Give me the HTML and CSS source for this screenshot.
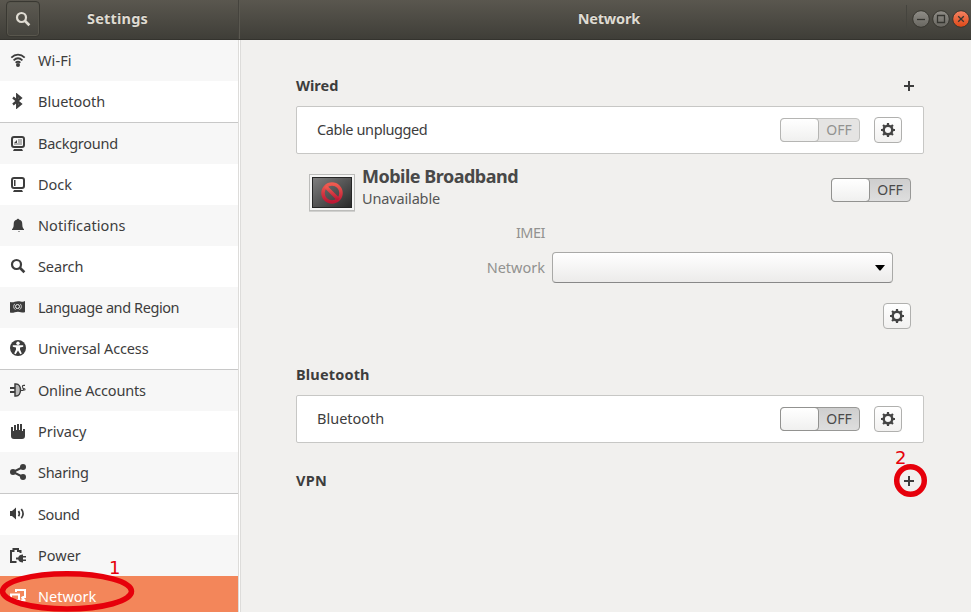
FILE: index.html
```html
<!DOCTYPE html>
<html lang="en">
<head>
<meta charset="utf-8">
<title>Settings</title>
<link rel="stylesheet" href="styles.css">
</head>
<body>
<svg class="defs" width="0" height="0" aria-hidden="true">
  <symbol id="gear" viewBox="0 0 16 16">
    <circle cx="8" cy="8" r="4.3" fill="none" stroke="currentColor" stroke-width="2.5"/>
    <path d="M8 1v3M8 12v3M1 8h3M12 8h3M3.050 3.050l2 2M10.950 10.950l2 2M3.050 12.950l2-2M10.950 5.050l2-2" fill="none" stroke="currentColor" stroke-width="2.200"/>
  </symbol>
  <symbol id="search" viewBox="0 0 16 16">
    <circle cx="6.5" cy="6.5" r="4.5" fill="none" stroke="currentColor" stroke-width="2.2"/>
    <path d="M9.8 9.8l4.6 4.4" fill="none" stroke="currentColor" stroke-width="2.6"/>
  </symbol>
</svg>
<div class="window">
  <header class="titlebar">
    <div class="title-left">
      <button class="search-btn"><svg class="icon"><use href="#search"/></svg></button>
      <h1 class="title t-settings">Settings</h1>
    </div>
    <div class="title-right">
      <h1 class="title t-network">Network</h1>
      <div class="controls">
        <svg class="ctl" viewBox="0 0 18 18"><circle class="gray" cx="9" cy="9" r="8.300"/><path d="M5 9.500h8"/></svg>
        <svg class="ctl" viewBox="0 0 18 18"><circle class="gray" cx="9" cy="9" r="8.300"/><path d="M5.500 5.500h7v7h-7z"/></svg>
        <svg class="ctl" viewBox="0 0 18 18"><defs><linearGradient id="og" x2="0" y2="1"><stop stop-color="#f58464"/><stop offset="1" stop-color="#dc4716"/></linearGradient><linearGradient id="gg" x2="0" y2="1"><stop stop-color="#908e88"/><stop offset="1" stop-color="#686660"/></linearGradient></defs><circle class="orange" cx="9" cy="9" r="8.300"/><path d="M6.200 6.200l5.600 5.600M11.800 6.200l-5.600 5.600"/></svg>
      </div>
    </div>
  </header>

  <nav class="sidebar">
    <div class="item"><svg class="icon" viewBox="0 0 16 16"><g fill="none" stroke="currentColor" stroke-width="1.8"><path d="M1.300 5.600c4-4 9.400-4 13.400 0M3.600 8.300c2.700-2.500 6.100-2.500 8.800 0M5.600 10.700c1.600-1.300 3.200-1.300 4.800 0"/></g><circle cx="8" cy="13" r="2" fill="currentColor"/></svg><span class="l-wifi">Wi-Fi</span></div>
    <div class="item"><svg class="icon" viewBox="0 0 16 16"><path d="M3 4.500l7.800 6.500L7.200 14V2l3.600 3L3 11.500" fill="none" stroke="currentColor" stroke-width="2.300"/></svg><span>Bluetooth</span></div>
    <div class="item sep"><svg class="icon" viewBox="0 0 16 16"><rect x="2" y="2" width="12" height="10" rx="2" fill="none" stroke="currentColor" stroke-width="2"/><path d="M8 4h4v6H4V8h4z" fill="#b4b4b4"/><path d="M4 8l3-3v3zM4 14h8l1 2H3z" fill="currentColor"/></svg><span class="l-bg">Background</span></div>
    <div class="item"><svg class="icon" viewBox="0 0 16 16"><rect x="2" y="2" width="12" height="10" rx="2" fill="none" stroke="currentColor" stroke-width="2"/><path d="M4 4h1.500v6H4zM4 14h8l1 2H3z" fill="currentColor"/></svg><span>Dock</span></div>
    <div class="item"><svg class="icon" viewBox="0 0 16 16"><path d="M7 2.500C7 1.500 9 1.500 9 2.500c2.800.6 3.300 2.500 3.300 5 0 3 .7 3.500 1.700 4.800v.7H2v-.7c1-1.300 1.700-1.800 1.700-4.800 0-2.500.5-4.400 3.300-5zM8 14h2c-.3 1-1.700 1-2 0z" fill="currentColor"/></svg><span class="l-not">Notifications</span></div>
    <div class="item"><svg class="icon"><use href="#search"/></svg><span class="l-search">Search</span></div>
    <div class="item"><svg class="icon" viewBox="0 0 16 16"><path d="M0 3c3 1 5-.8 8-.8S13 3.500 15 2v11c-2 1.300-4-.3-7-.3S3 14.500 0 13.500z" fill="currentColor"/><g fill="none" stroke="#eee"><circle cx="7.500" cy="7.500" r="2"/><path d="M4.800 4.800c-1.500 1.500-1.500 4 0 5.500M10.200 4.800c1.500 1.500 1.500 4 0 5.500M5.500 10.500l1-1M9.500 10.500l-1-1" stroke-width=".8"/></g></svg><span class="l-lang">Language and Region</span></div>
    <div class="item"><svg class="icon" viewBox="0 0 16 16"><circle cx="8" cy="8" r="8" fill="currentColor"/><circle cx="8" cy="3.300" r="1.700" fill="#fff"/><path d="M2.800 5.200h10.400v1.600L10 7.600v2l1.800 4-1.500.7L8 10.500l-2.300 3.800-1.500-.7 1.800-4v-2l-3.200-.8z" fill="#fff"/></svg><span class="l-ua">Universal Access</span></div>
    <div class="item sep"><svg class="icon" viewBox="0 0 16 16"><path d="M5 2h1c6 0 6 12 0 12H5z" fill="#bbb" stroke="currentColor" stroke-width="1.500"/><path d="M0 5h5v2H0zM0 9h5v2H0z" fill="currentColor"/><path d="M11 8.500h1.500c2.500 0-.8-3.500 0-4.600.5-.8 1.500-.5 2.500-.5M13.500 6.500c1.500 0 2 .8 1 2" fill="none" stroke="currentColor" stroke-width="1.100"/></svg><span class="l-oa">Online Accounts</span></div>
    <div class="item"><svg class="icon" viewBox="0 0 16 16"><path d="M1 4h2v4h1V2h2v5h1V1h2v6h1V1h2v7h1V6h2v7q0 3-3 3H4q-3 0-3-3z" fill="currentColor"/></svg><span>Privacy</span></div>
    <div class="item"><svg class="icon" viewBox="0 0 16 16"><path d="M13 3L3 8l10 5" fill="none" stroke="currentColor" stroke-width="2"/><g fill="currentColor"><circle cx="13" cy="3" r="3"/><circle cx="3" cy="8" r="3"/><circle cx="13" cy="13" r="3"/></g></svg><span class="l-share">Sharing</span></div>
    <div class="item sep"><svg class="icon" viewBox="0 0 16 16"><path d="M0 5h2l4-3.500v12L2 10H0z" fill="currentColor"/><path d="M8.500 5q1.700 2.700 0 5.300M11.300 3q3.500 4.700 0 9.300" fill="none" stroke="currentColor" stroke-width="1.700"/></svg><span class="l-sound">Sound</span></div>
    <div class="item"><svg class="icon" viewBox="0 0 16 16"><path d="M6.500 15H1V4h2.500V2H8v2h2.500v2" fill="none" stroke="currentColor" stroke-width="2"/><path d="M6 10.500h2.200Q9 7.500 13 7.500V9h3v1.500h-3v2h3V14h-3v1.500Q9 15.500 8.200 12.500H6z" fill="currentColor"/></svg><span>Power</span></div>
    <div class="item selected"><svg class="icon" viewBox="0 0 16 16"><g fill="none" stroke="currentColor" stroke-width="2"><path d="M6 4V2h9v7h-2.500"/><path d="M1 6.500h8v5.500H1zM11.500 9l3.500 3.500M10.500 12.500h5"/></g></svg><span>Network</span></div>
  </nav>

  <main class="content">
    <div class="heading"><h2>Wired</h2><svg class="plus" viewBox="0 0 10 10"><path d="M5 0v10M0 5h10"/></svg></div>
    <section class="card"><span class="caption c-cable">Cable unplugged</span><div class="switch disabled"><i class="knob"></i><span class="state">OFF</span></div><button class="gear"><svg class="icon"><use href="#gear"/></svg></button></section>

    <section class="mobile">
      <svg class="screen" viewBox="0 0 46 38"><defs><linearGradient id="sc" x2="1" y2="1"><stop stop-color="#808080"/><stop offset="1" stop-color="#292929"/></linearGradient><linearGradient id="rd" x2="0" y2="1"><stop stop-color="#ef5b50"/><stop offset="1" stop-color="#bd1733"/></linearGradient></defs><rect x=".5" y=".5" width="45" height="36" fill="#f5f5f4" stroke="#bcbcba"/><path d="M0 37.500h46" stroke="#d0d0ce"/><rect x="3.500" y="3.500" width="39" height="30" fill="url(#sc)" stroke="#252525"/><g fill="none" stroke="url(#rd)" stroke-width="3.500"><circle cx="23" cy="19" r="9"/><path d="M16.500 12.500l13 13"/></g></svg>
      <div class="mobile-text"><h2 class="h-mobile">Mobile Broadband</h2><span class="unavailable">Unavailable</span></div>
      <div class="switch"><i class="knob"></i><span class="state">OFF</span></div>
    </section>
    <div class="form">
      <span class="label f-imei">IMEI</span><span></span>
      <span class="label">Network</span><div class="select"><svg viewBox="0 0 10 6" width="10" height="6"><path d="M0 0h10L5.500 5.500h-1z"/></svg></div>
    </div>
    <div class="mobile-actions"><button class="gear"><svg class="icon"><use href="#gear"/></svg></button></div>

    <div class="heading bt"><h2 class="h-bt">Bluetooth</h2></div>
    <section class="card"><span class="caption">Bluetooth</span><div class="switch"><i class="knob"></i><span class="state">OFF</span></div><button class="gear"><svg class="icon"><use href="#gear"/></svg></button></section>
    <div class="heading vpn"><h2 class="h-vpn">VPN</h2><svg class="plus" viewBox="0 0 10 10"><path d="M5 0v10M0 5h10"/></svg></div>
  </main>
  <svg class="marks" viewBox="0 0 971 612"><g fill="none" stroke="#e6000b" stroke-width="5.500"><ellipse cx="67" cy="591.300" rx="64.500" ry="17.600"/><circle cx="910.500" cy="480.500" r="13.800"/></g><text x="109" y="574">1</text><text x="895" y="464">2</text></svg>
</div>
</body>
</html>
```
FILE: styles.css
```css
* { box-sizing: border-box; }
body { margin: 0; overflow: hidden; background: #f1f0ee; color: #3d3d3d; font: 14.5px/20px "Noto Sans", sans-serif; }
h1, h2 { margin: 0; }
button { padding: 0; font: inherit; }
span, h1, h2 { white-space: nowrap; }
.defs { position: absolute; }
.window { width: 971px; height: 612px; display: grid; grid-template: 40px 572px / 241px 730px; position: relative; overflow: hidden; }
.titlebar { grid-column: 1 / 3; display: grid; grid-template-columns: 239px 1fr; background: linear-gradient(#5a574f, #3f3e38); border-bottom: 1px solid #34332e; color: #dfdbd2; }
.title-left { display: flex; align-items: center; padding: 0 0 2px 6px; border-right: 1px solid #45433d; }
.title-right { display: flex; align-items: center; justify-content: flex-end; padding: 0 1px 2px 0; border-left: 1px solid #5a5850; }
.title { padding-bottom: 2px; font-size: 14.5px; font-weight: 700; text-shadow: 0 -1px #3a3934; }
.search-btn { width: 34px; height: 36px; display: flex; align-items: center; justify-content: center; color: #e0dcd3; background: #ffffff06; border: 1px solid #393832; border-radius: 4px; box-shadow: inset 0 0 0 1px #58564d; }
.t-settings { margin-left: 47px; letter-spacing: .2px; }
.t-network { letter-spacing: -.2px; }
.controls { display: flex; align-items: center; gap: 2px; height: 28px; margin-left: 266px; padding-left: 5px; border-left: 1px solid #45443e; }
.ctl { width: 18px; height: 18px; fill: none; stroke: #353530; stroke-width: 1.3; }
.ctl .gray { fill: url(#gg); stroke: #37362f; stroke-width: 1; }
.ctl .orange { fill: url(#og); stroke: #37362f; stroke-width: 1; }
.icon { width: 16px; height: 16px; flex: none; display: block; }
.sidebar { background: #fff; border-right: 3px double #dddcda; overflow: hidden; }
.item { height: 41px; padding: 0 0 1px 10px; display: flex; align-items: center; gap: 12px; }
.item:nth-child(odd) { background: #f7f7f7; }
.item.sep { height: 42px; border-top: 1px solid #c8c8c8; }
.item.selected { background: #f3865a; color: #fff; }
.l-wifi { letter-spacing: .1px; }
.l-bg { letter-spacing: -.27px; }
.l-not { letter-spacing: .1px; }
.l-search { letter-spacing: -.1px; }
.l-lang { letter-spacing: -.41px; }
.l-ua { letter-spacing: -.14px; }
.l-oa { letter-spacing: -.2px; }
.l-share { letter-spacing: -.3px; }
.l-sound { letter-spacing: -.4px; }
.content { padding: 33px 47px 0 55px; }
.heading { height: 26px; display: flex; align-items: center; justify-content: space-between; padding-right: 10px; }
.heading h2 { padding-bottom: 2px; font-size: 14.5px; line-height: 20px; }
.h-bt { letter-spacing: .17px; }
.h-vpn { letter-spacing: .3px; }
.plus { width: 10px; height: 10px; stroke: #3d3d3d; stroke-width: 2; }
.card { height: 48px; margin-top: 7px; padding: 0 21px 0 20px; display: flex; align-items: center; background: #fff; border: 1px solid #c7c7c5; border-radius: 2px; }
.caption { padding-bottom: 2px; }
.c-cable { letter-spacing: -.4px; }
.card .switch { margin-left: auto; }
.card .gear { margin-left: 14px; }
.switch { width: 80px; height: 24px; display: flex; border: 1px solid #989896; border-radius: 4px; background: linear-gradient(#cecece, #dedede); }
.knob { width: 39px; height: 24px; margin: -1px 0 0 -1px; border: 1px solid #929290; border-radius: 4px; background: linear-gradient(#fff, #f0f0ef); }
.state { flex: 1; text-align: center; line-height: 22px; font-size: 14px; color: #4a4a4a; }
.disabled { background: #e5e4e3; border-color: #c2c2c0; }
.disabled .knob { border-color: #b5b5b3; }
.disabled .state { color: #929290; }
.gear { width: 28px; height: 26px; display: flex; align-items: center; justify-content: center; color: #444; border: 1px solid #b0b0ae; border-radius: 4px; background: linear-gradient(#fff, #f2f1f0); }
.mobile { height: 60px; display: flex; padding: 10px 13px 0 13px; }
.screen { width: 46px; height: 38px; margin-top: 10px; }
.mobile-text { margin-left: 7px; display: flex; flex-direction: column; }
.h-mobile { font-size: 18px; line-height: 24px; letter-spacing: -.5px; color: #484848; }
.unavailable { color: #555; line-height: 20px; letter-spacing: -.15px; }
.mobile .switch { margin: 14px 0 0 auto; }
.form { display: grid; grid-template: 20px 31px / 249px 341px; row-gap: 9px; column-gap: 7px; margin-top: 9px; align-items: center; }
.label { justify-self: end; padding-bottom: 2px; color: #929290; }
.f-imei { letter-spacing: -.5px; }
.select { height: 31px; padding-right: 7px; display: flex; align-items: center; justify-content: flex-end; border: 1px solid #a9a9a7; border-bottom-color: #888; border-radius: 4px; background: linear-gradient(#fff, #ecebea); }
.mobile-actions { display: flex; justify-content: flex-end; margin-top: 20px; padding-right: 13px; }
.bt { margin-top: 33px; }
.vpn { margin-top: 25px; }
.marks { position: absolute; inset: 0; width: 971px; height: 612px; pointer-events: none; font: 18px "DejaVu Sans", sans-serif; fill: #e6000b; }
```
